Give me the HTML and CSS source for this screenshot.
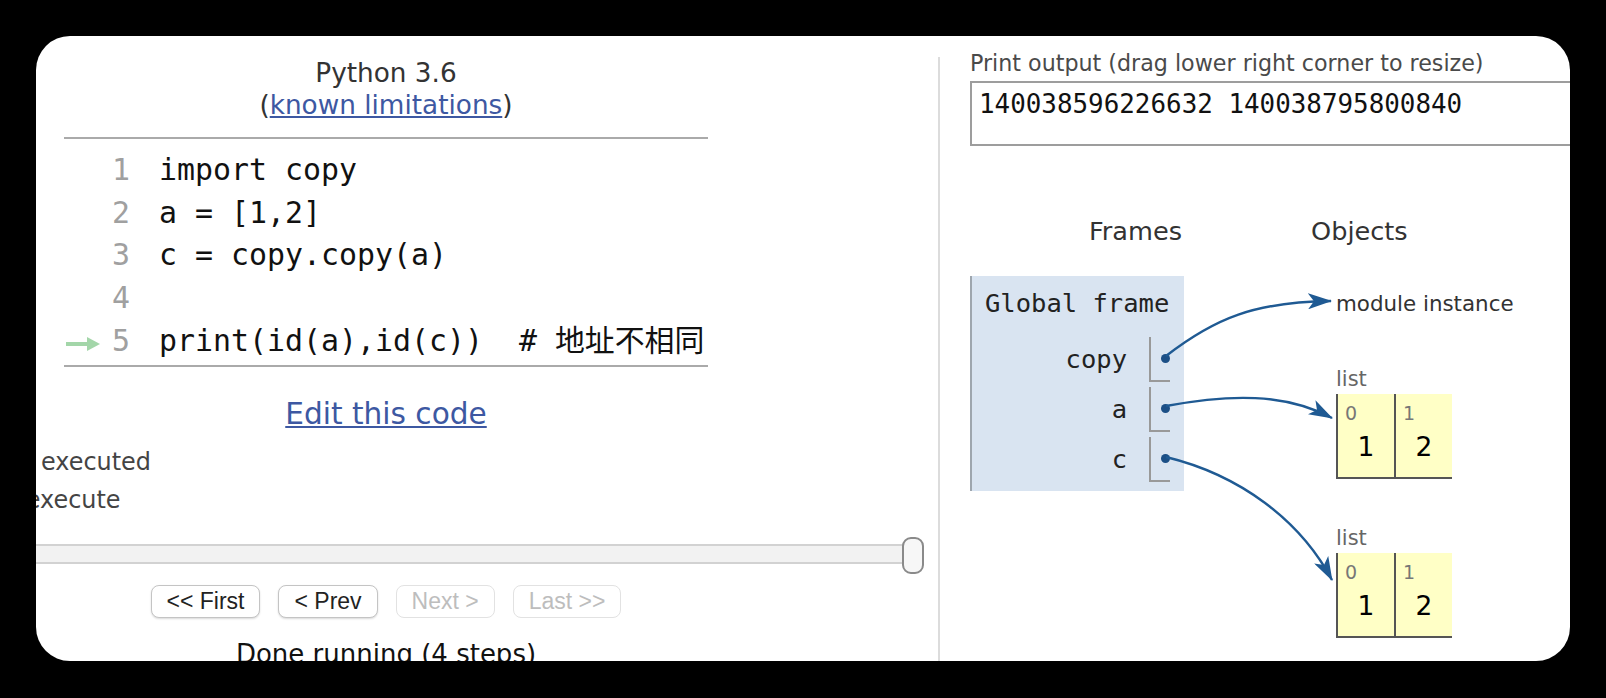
FILE: index.html
```html
<!DOCTYPE html>
<html lang="zh">
<head>
<meta charset="utf-8">
<title>Python Tutor</title>
<link rel="stylesheet" href="styles.css">
</head>
<body>
<div class="card">
  <div class="left-pane">
    <div class="code-area">
      <div class="lang">Python 3.6<br>(<a href="#" class="link">known limitations</a>)</div>
      <div class="code">
        <div class="row"><span class="gutter"></span><span class="ln">1</span><span class="src">import copy</span></div>
        <div class="row"><span class="gutter"></span><span class="ln">2</span><span class="src">a = [1,2]</span></div>
        <div class="row"><span class="gutter"></span><span class="ln">3</span><span class="src">c = copy.copy(a)</span></div>
        <div class="row"><span class="gutter"></span><span class="ln">4</span><span class="src"></span></div>
        <div class="row"><span class="gutter"><svg class="cur-arrow" width="34" height="14" viewBox="0 0 34 14"><rect x="0" y="5" width="23" height="4" fill="#a3d6a9"/><polygon points="21,0 34,7 21,14" fill="#a3d6a9"/></svg></span><span class="ln">5</span><span class="src">print(id(a),id(c))  # 地址不相同</span></div>
      </div>
      <div class="edit"><a href="#" class="link">Edit this code</a></div>
    </div>
    <div class="legend">
      <div class="legend-item"><svg width="30" height="14" viewBox="0 0 34 14"><rect x="0" y="5" width="23" height="4" fill="#a3d6a9"/><polygon points="21,0 34,7 21,14" fill="#a3d6a9"/></svg><span>line that just executed</span></div>
      <div class="legend-item"><svg width="30" height="14" viewBox="0 0 34 14"><rect x="0" y="5" width="23" height="4" fill="#e93f34"/><polygon points="21,0 34,7 21,14" fill="#e93f34"/></svg><span>next line to execute</span></div>
    </div>
    <div class="slider"><div class="thumb"></div></div>
    <div class="code-area">
      <div class="vcr">
        <button class="btn">&lt;&lt; First</button>
        <button class="btn">&lt; Prev</button>
        <button class="btn disabled">Next &gt;</button>
        <button class="btn disabled">Last &gt;&gt;</button>
      </div>
      <div class="status">Done running (4 steps)</div>
    </div>
  </div>

  <div class="right-pane">
    <div class="out-label">Print output (drag lower right corner to resize)</div>
    <div class="out-box">140038596226632 140038795800840</div>
    <div class="viz">
      <div class="frames-col">
        <div class="hdr hdr-right">Frames</div>
        <div class="frame">
          <div class="frame-title">Global frame</div>
          <div class="vars">
            <div class="vname">copy</div><div class="vval"><span class="dot"></span></div>
            <div class="vname">a</div><div class="vval"><span class="dot"></span></div>
            <div class="vname">c</div><div class="vval"><span class="dot"></span></div>
          </div>
        </div>
      </div>
      <div class="heap-col">
        <div class="hdr">Objects</div>
        <div class="heap-items">
          <div class="module">module instance</div>
          <div class="list-label first">list</div>
          <div class="list">
            <div class="cell"><div class="idx">0</div><div class="val">1</div></div>
            <div class="cell"><div class="idx">1</div><div class="val">2</div></div>
          </div>
          <div class="list-label second">list</div>
          <div class="list">
            <div class="cell"><div class="idx">0</div><div class="val">1</div></div>
            <div class="cell"><div class="idx">1</div><div class="val">2</div></div>
          </div>
        </div>
      </div>
    </div>
  </div>

  <svg class="arrows" width="1534" height="625" viewBox="36 36 1534 625">
    <defs>
      <marker id="head" markerUnits="userSpaceOnUse" markerWidth="24" markerHeight="16" refX="23" refY="8" viewBox="0 0 24 16" orient="auto">
        <path d="M0,0 L24,8 L0,16 L6,8 z" fill="#1f5a93"/>
      </marker>
    </defs>
    <path d="M1166,356 C1215,318 1255,302 1331,301" fill="none" stroke="#1f5a93" stroke-width="2.4" marker-end="url(#head)"/>
    <path d="M1166,406 C1230,394 1285,393 1332,418" fill="none" stroke="#1f5a93" stroke-width="2.4" marker-end="url(#head)"/>
    <path d="M1166,457 C1240,475 1300,520 1332,580" fill="none" stroke="#1f5a93" stroke-width="2.4" marker-end="url(#head)"/>
  </svg>
</div>
</body>
</html>
```

FILE: styles.css
```css
html, body {
  margin: 0;
  padding: 0;
}
body {
  background: #000;
  width: 1606px;
  height: 698px;
  overflow: hidden;
  font-family: "DejaVu Sans", Verdana, sans-serif;
}
.card {
  position: relative;
  margin: 36px 0 0 36px;
  width: 1534px;
  height: 625px;
  background: #fff;
  border-radius: 34px;
  overflow: hidden;
  display: flex;
  align-items: flex-start;
}

/* ---------- left pane ---------- */
.left-pane {
  flex: none;
  width: 902px;
  margin-top: 21px;
  border-right: 2px solid #dcdcdc;
  padding-bottom: 60px;
}
.code-area {
  width: 700px;
}
.lang {
  text-align: center;
  font-size: 26.3px;
  line-height: 32px;
  color: #333;
}
.link {
  color: #3d58a2;
  text-decoration: underline;
}
.code {
  width: 644px;
  margin: 16px auto 0;
  border-top: 2px solid #aaaaaa;
  border-bottom: 2px solid #aaaaaa;
  padding: 10px 0 3px;
  font-family: "DejaVu Sans Mono", "Noto Sans CJK SC", monospace;
  font-size: 29.9px;
}
.row {
  display: flex;
  align-items: center;
  height: 42.7px;
  line-height: 42.7px;
}
.gutter {
  width: 40px;
  height: 100%;
  display: flex;
  align-items: center;
  padding-top: 6px;
  box-sizing: border-box;
}
.cur-arrow {
  margin-left: 2px;
}
.ln {
  width: 26px;
  text-align: right;
  color: #a0a0a0;
}
.src {
  margin-left: 29px;
  white-space: pre;
  color: #111;
}
.edit {
  margin-top: 29px;
  text-align: center;
  font-size: 29.6px;
  line-height: 36px;
}
.legend {
  margin-top: 11px;
  margin-left: -191px;
  font-size: 23.9px;
  line-height: 38px;
  color: #444;
}
.legend-item {
  display: flex;
  align-items: center;
  gap: 8px;
  white-space: nowrap;
}
.slider {
  position: relative;
  margin-top: 25px;
  margin-left: -20px;
  width: 904px;
  height: 16px;
  background: #f2f2f2;
  border-top: 2px solid #d2d2d2;
  border-bottom: 2px solid #d2d2d2;
}
.thumb {
  position: absolute;
  right: -4px;
  top: -9px;
  width: 22px;
  height: 37px;
  box-sizing: border-box;
  border: 2px solid #8a8a8a;
  border-radius: 9px;
  background: #f7f7f7;
}
.vcr {
  margin-top: 21px;
  display: flex;
  justify-content: center;
  gap: 18px;
}
.btn {
  height: 33px;
  padding: 0 15px;
  font-family: "Liberation Sans", Arial, sans-serif;
  font-size: 23px;
  line-height: 31px;
  color: #222;
  background: #fff;
  border: 1px solid #c4c4c4;
  border-radius: 8px;
  box-shadow: 0 1px 2px rgba(0, 0, 0, 0.15);
}
.btn.disabled {
  color: #bdbdbd;
  border-color: #e2e2e2;
  box-shadow: none;
}
.status {
  margin-top: 20px;
  text-align: center;
  font-size: 26px;
  line-height: 32px;
  color: #111;
}

/* ---------- right pane ---------- */
.right-pane {
  flex: none;
  margin-top: 13.5px;
  padding-left: 30px;
}
.out-label {
  font-size: 22.2px;
  line-height: 26px;
  color: #4a4a4a;
  white-space: nowrap;
}
.out-box {
  margin-top: 5.5px;
  width: 640px;
  height: 64.5px;
  box-sizing: border-box;
  border: 2px solid #9d9d9d;
  padding: 3.5px 7px 0;
  font-family: "DejaVu Sans Mono", monospace;
  font-size: 25.9px;
  line-height: 34px;
  color: #111;
  white-space: nowrap;
}
.viz {
  margin-top: 70.5px;
  display: flex;
}
.frames-col {
  width: 214px;
  margin-right: 127px;
}
.hdr {
  font-size: 25.6px;
  line-height: 31px;
  color: #333;
  margin-bottom: 28.5px;
}
.hdr-right {
  text-align: right;
  padding-right: 2px;
}
.frame {
  background: #d9e4f1;
  border-left: 2px solid #9ea6ae;
  padding: 12.5px 14px 8.6px 13px;
}
.frame-title {
  font-family: "DejaVu Sans Mono", monospace;
  font-size: 25.5px;
  line-height: 30px;
  color: #222;
  white-space: nowrap;
}
.vars {
  margin-top: 19px;
  display: grid;
  grid-template-columns: 1fr 21px;
  column-gap: 22px;
  row-gap: 5px;
}
.vname {
  text-align: right;
  font-family: "DejaVu Sans Mono", monospace;
  font-size: 25.5px;
  line-height: 45px;
  color: #222;
}
.vval {
  height: 45px;
  box-sizing: border-box;
  border-left: 2px solid #999;
  border-bottom: 2px solid #999;
  display: flex;
  align-items: center;
  justify-content: flex-end;
}
.dot {
  width: 9px;
  height: 9px;
  border-radius: 50%;
  background: #1c4f86;
}
.heap-items {
  padding-left: 25px;
  padding-top: 15px;
}
.module {
  font-size: 21.4px;
  line-height: 26px;
  color: #333;
  white-space: nowrap;
}
.list-label {
  font-size: 21px;
  line-height: 24px;
  color: #666;
}
.list-label.first {
  margin-top: 50px;
}
.list-label.second {
  margin-top: 47px;
}
.list {
  margin-top: 3px;
  display: flex;
  width: fit-content;
  height: 85px;
  box-sizing: border-box;
  border-left: 2px solid #555;
  border-bottom: 2px solid #555;
}
.cell {
  width: 56px;
  background: #ffffc6;
  padding-top: 8px;
}
.cell + .cell {
  border-left: 2px solid #555;
}
.idx {
  font-size: 19px;
  line-height: 22px;
  color: #777;
  padding-left: 7px;
}
.val {
  margin-top: 8px;
  font-size: 26.5px;
  line-height: 30px;
  text-align: center;
  color: #000;
}
.arrows {
  position: absolute;
  left: 0;
  top: 0;
  pointer-events: none;
}
```
